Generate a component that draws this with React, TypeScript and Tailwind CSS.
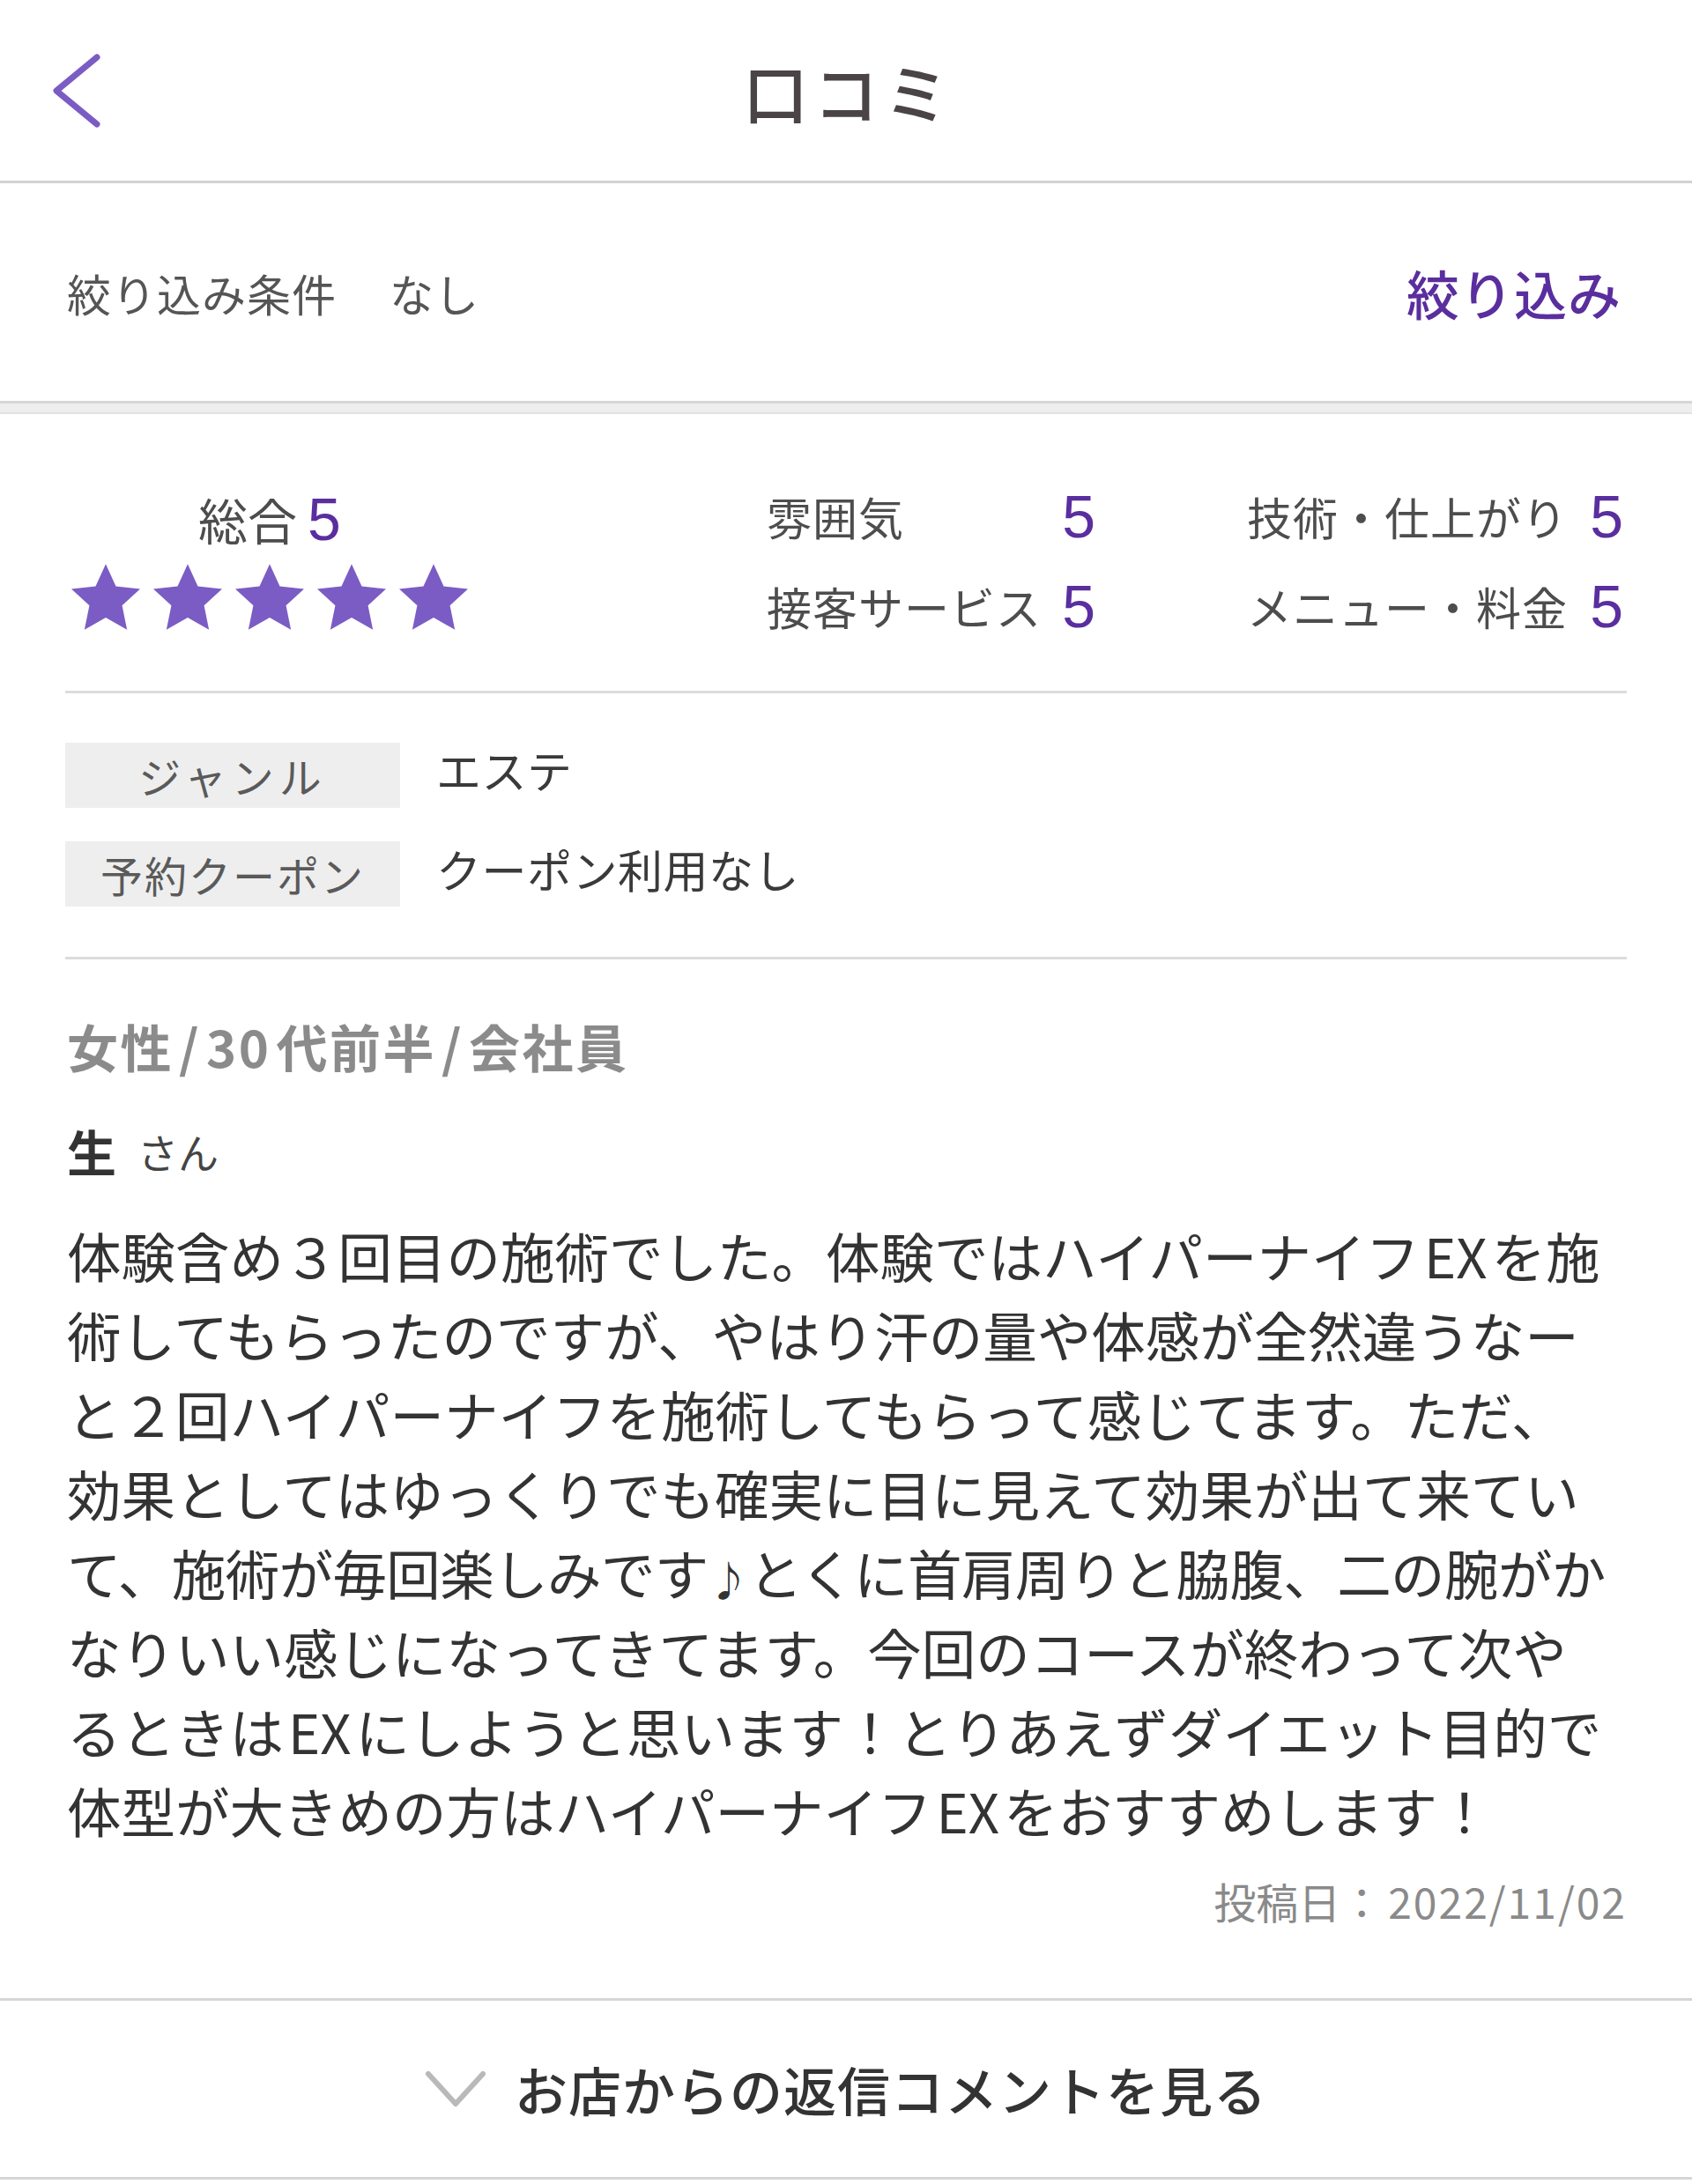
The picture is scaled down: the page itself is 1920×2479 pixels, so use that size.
import React from "react";

const FONT = { fontFamily: '"Noto Sans CJK JP", "Noto Sans", sans-serif' };
const NUM = { fontFamily: '"Liberation Sans", "Noto Sans", sans-serif' };

function Star() {
  return (
    <svg width="78" height="75" viewBox="1.5 1.5 21 20" aria-hidden>
      <polygon
        points="12,1.5 15.1,8.3 22.5,9.1 17,14.1 18.5,21.5 12,17.8 5.5,21.5 7,14.1 1.5,9.1 8.9,8.3"
        fill="#7b5cc4"
      />
    </svg>
  );
}

function Score({ label, w }: { label: string; w: string }) {
  return (
    <div className={`flex items-center justify-between h-[68px] ${w}`}>
      <span className="text-[51px] leading-none text-[#4d4d4d] tracking-[1px]">{label}</span>
      <span className="text-[68px] leading-none text-[#5a2e9e]" style={NUM}>
        5
      </span>
    </div>
  );
}

function EX() {
  return <span className="mx-[5px]">EX</span>;
}

export default function App() {
  return (
    <div className="w-[1920px] bg-white text-[#333]" style={FONT}>
      {/* Header */}
      <div className="grid grid-cols-[1fr_auto_1fr] items-center h-[208px] border-b-[3px] border-[#d2d2d2]">
        <div className="pl-[58px] flex items-center">
          <svg width="58" height="86" viewBox="0 0 58 86" aria-hidden>
            <polyline
              points="52,5 6,43 52,81"
              fill="none"
              stroke="#7b5cc4"
              strokeWidth="7"
              strokeLinecap="round"
              strokeLinejoin="round"
            />
          </svg>
        </div>
        <div className="text-[74px] leading-none font-medium text-[#4a4446] tracking-[6px] pl-[6px]">口コミ</div>
        <div />
      </div>

      {/* Filter row */}
      <div className="flex items-center justify-between h-[247px] pl-[76px] pr-[80px]">
        <div className="flex items-center text-[50px] leading-none text-[#555] tracking-[1px]">
          <span>絞り込み条件</span>
          <span className="ml-[60px]">なし</span>
        </div>
        <div className="text-[60px] leading-none font-medium text-[#5a2e9e] tracking-[1px]">絞り込み</div>
      </div>

      {/* Band */}
      <div className="h-[15px] bg-[#eeeeee] border-t-[3px] border-b-[2px] border-t-[#d6d6d6] border-b-[#e2e2e2]" />

      {/* Ratings */}
      <div className="px-[74px]">
        <div className="flex pt-[85px] pb-[62px] border-b-[3px] border-[#dcdcdc]">
          <div className="w-[464px] flex flex-col items-center">
            <div className="flex items-center h-[68px]">
              <span className="text-[56px] leading-none text-[#4d4d4d]">総合</span>
              <span className="text-[68px] leading-none text-[#5a2e9e] ml-[12px]" style={NUM}>
                5
              </span>
            </div>
            <div className="flex gap-[15px] mt-[17px]">
              <Star />
              <Star />
              <Star />
              <Star />
              <Star />
            </div>
          </div>
          <div className="ml-[332px] -mt-[3px] flex flex-col gap-[34px]">
            <div className="flex gap-[172px]">
              <Score label="雰囲気" w="w-[373px]" />
              <Score label="技術・仕上がり" w="w-[427px]" />
            </div>
            <div className="flex gap-[172px]">
              <Score label="接客サービス" w="w-[373px]" />
              <Score label="メニュー・料金" w="w-[427px]" />
            </div>
          </div>
        </div>

        {/* Genre */}
        <div className="pt-[56px] pb-[57px] border-b-[3px] border-[#dcdcdc] flex flex-col gap-[38px]">
          <div className="flex items-center">
            <div className="w-[380px] h-[74px] bg-[#eeeeee] flex items-center justify-center text-[48px] leading-none text-[#5a5a5a] tracking-[6px]">
              ジャンル
            </div>
            <div className="ml-[41px] text-[51px] leading-none text-[#3a3a3a] -mt-[14px] tracking-[0.5px]">エステ</div>
          </div>
          <div className="flex items-center">
            <div className="w-[380px] h-[74px] bg-[#eeeeee] flex items-center justify-center text-[48px] leading-none text-[#5a5a5a] tracking-[2px]">
              予約クーポン
            </div>
            <div className="ml-[41px] text-[51px] leading-none text-[#3a3a3a] -mt-[12px] tracking-[0.5px]">
              クーポン利用なし
            </div>
          </div>
        </div>

        {/* Review */}
        <div className="pt-[63px] pb-[81px] px-[2px]">
          <div className="h-[70px] flex items-center text-[58px] leading-none font-bold text-[#8b8b8b] tracking-[2.5px]">
            女性<span className="mx-[6px]">/</span>30<span className="ml-[6px]">代前半</span>
            <span className="mx-[6px]">/</span>会社員
          </div>
          <div className="h-[70px] mt-[49px] flex items-center">
            <span className="text-[56px] leading-none font-bold text-[#333]">生</span>
            <span className="text-[46px] leading-none text-[#444] ml-[24px]">さん</span>
          </div>
          <div className="mt-[39px] text-[61.5px] leading-[90px] text-[#333]">
            <div className="whitespace-nowrap h-[90px]">
              体験含め３回目の施術でした。体験ではハイパーナイフ<EX />を施
            </div>
            <div className="whitespace-nowrap h-[90px]">術してもらったのですが、やはり汗の量や体感が全然違うなー</div>
            <div className="whitespace-nowrap h-[90px]">と２回ハイパーナイフを施術してもらって感じてます。ただ、</div>
            <div className="whitespace-nowrap h-[90px]">効果としてはゆっくりでも確実に目に見えて効果が出て来てい</div>
            <div className="whitespace-nowrap h-[90px] tracking-[-0.6px]">
              て、施術が毎回楽しみです<span className="text-[46px] leading-none">♪</span>とくに首肩周りと脇腹、二の腕がか
            </div>
            <div className="whitespace-nowrap h-[90px]">なりいい感じになってきてます。今回のコースが終わって次や</div>
            <div className="whitespace-nowrap h-[90px]">
              るときは<EX />にしようと思います！とりあえずダイエット目的で
            </div>
            <div className="whitespace-nowrap h-[90px]">
              体型が大きめの方はハイパーナイフ<EX />をおすすめします！
            </div>
          </div>
          <div className="mt-[27px] h-[60px] flex items-center justify-end text-[48px] leading-none text-[#8a8a8a]">
            <span>投稿日：</span>
            <span className="ml-[6px] tracking-[2px] -mr-[2px]">2022/11/02</span>
          </div>
        </div>
      </div>

      {/* Reply */}
      <div className="h-[206px] border-t-[3px] border-b-[3px] border-[#d6d6d6] flex items-center justify-center">
        <svg width="70" height="42" viewBox="0 0 70 42" aria-hidden>
          <polyline
            points="4,4 35,38 66,4"
            fill="none"
            stroke="#b9b9b9"
            strokeWidth="6"
            strokeLinecap="round"
            strokeLinejoin="round"
          />
        </svg>
        <span className="ml-[32px] text-[60px] leading-none font-medium text-[#333] tracking-[1px]">
          お店からの返信コメントを見る
        </span>
      </div>
      <div className="h-[8px]" />
    </div>
  );
}
